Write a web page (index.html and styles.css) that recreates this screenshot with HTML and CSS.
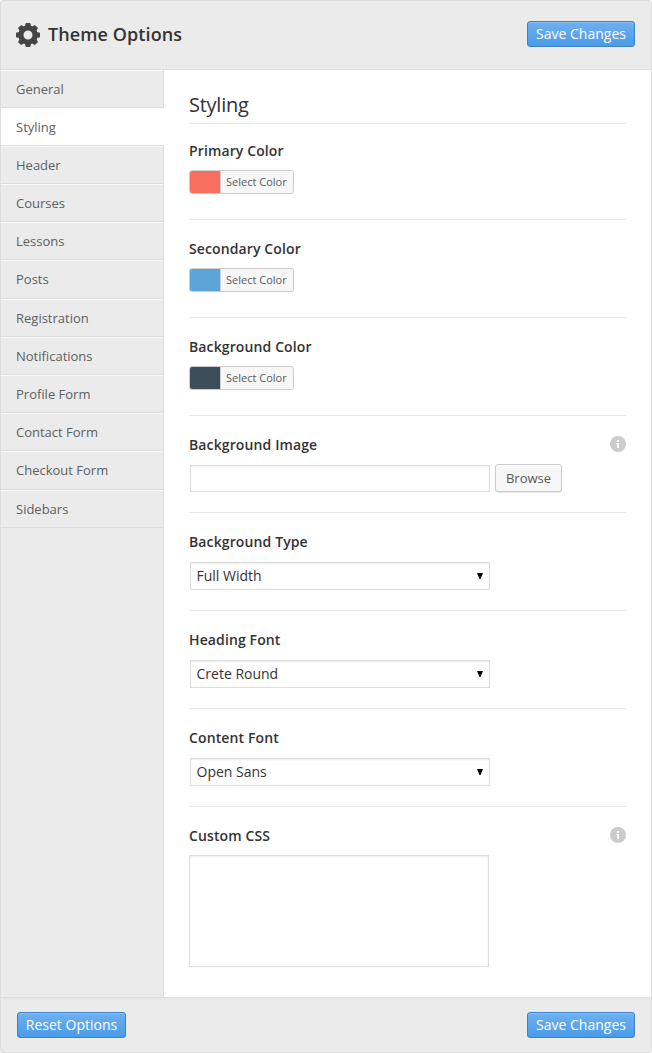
FILE: index.html
```html
<!DOCTYPE html>
<html lang="en">
<head>
<meta charset="utf-8">
<title>Theme Options</title>
<link rel="stylesheet" href="styles.css">
</head>
<body>
<form class="panel">
  <header class="panel-header">
    <svg class="gear" viewBox="-12 -12 24 24">
      <defs><path id="tooth" d="M-3.300-7L-2.500-11.200Q-2.300-12-1.500-12H1.500Q2.300-12 2.500-11.200L3.300-7z"/></defs>
      <circle r="7.100" fill="none" stroke="#444" stroke-width="5.200"/>
      <g fill="#444">
        <use href="#tooth"/><use href="#tooth" transform="rotate(45)"/>
        <use href="#tooth" transform="rotate(90)"/><use href="#tooth" transform="rotate(135)"/>
        <use href="#tooth" transform="rotate(180)"/><use href="#tooth" transform="rotate(225)"/>
        <use href="#tooth" transform="rotate(270)"/><use href="#tooth" transform="rotate(315)"/>
      </g>
    </svg>
    <h1 class="title">Theme Options</h1>
    <button type="button" class="btn-primary">Save Changes</button>
  </header>
  <div class="panel-body">
    <nav class="menu">
      <a class="menu-item">General</a>
      <a class="menu-item active">Styling</a>
      <a class="menu-item">Header</a>
      <a class="menu-item">Courses</a>
      <a class="menu-item">Lessons</a>
      <a class="menu-item">Posts</a>
      <a class="menu-item">Registration</a>
      <a class="menu-item">Notifications</a>
      <a class="menu-item">Profile Form</a>
      <a class="menu-item">Contact Form</a>
      <a class="menu-item">Checkout Form</a>
      <a class="menu-item">Sidebars</a>
    </nav>
    <main class="content">
      <h2 class="section-title">Styling</h2>
      <section class="option first">
        <h3 class="label">Primary Color</h3>
        <div class="color-picker"><span class="swatch coral"></span><span class="pick">Select Color</span></div>
      </section>
      <section class="option">
        <h3 class="label">Secondary Color</h3>
        <div class="color-picker"><span class="swatch blue"></span><span class="pick">Select Color</span></div>
      </section>
      <section class="option">
        <h3 class="label">Background Color</h3>
        <div class="color-picker"><span class="swatch slate"></span><span class="pick">Select Color</span></div>
      </section>
      <section class="option upload">
        <div class="label-row">
          <h3 class="label">Background Image</h3>
          <svg class="info" viewBox="0 0 16 16"><circle cx="8" cy="8" r="8" fill="#ccc"/><path d="M7 4h2v2H7zM6.500 7H9v5H7V8h-.5z" fill="#fff"/></svg>
        </div>
        <div class="upload-row"><input class="text-field" type="text"><button type="button" class="btn-browse">Browse</button></div>
      </section>
      <section class="option">
        <h3 class="label">Background Type</h3>
        <div class="select"><span>Full Width</span><svg class="arrow" viewBox="0 0 6 6"><path d="M0 0h6L3.500 6h-1z"/></svg></div>
      </section>
      <section class="option">
        <h3 class="label">Heading Font</h3>
        <div class="select"><span>Crete Round</span><svg class="arrow" viewBox="0 0 6 6"><path d="M0 0h6L3.500 6h-1z"/></svg></div>
      </section>
      <section class="option">
        <h3 class="label">Content Font</h3>
        <div class="select"><span>Open Sans</span><svg class="arrow" viewBox="0 0 6 6"><path d="M0 0h6L3.500 6h-1z"/></svg></div>
      </section>
      <section class="option last">
        <div class="label-row">
          <h3 class="label">Custom CSS</h3>
          <svg class="info" viewBox="0 0 16 16"><circle cx="8" cy="8" r="8" fill="#ccc"/><path d="M7 4h2v2H7zM6.500 7H9v5H7V8h-.5z" fill="#fff"/></svg>
        </div>
        <textarea class="code"></textarea>
      </section>
    </main>
  </div>
  <footer class="panel-footer">
    <button type="button" class="btn-primary reset">Reset Options</button>
    <button type="button" class="btn-primary">Save Changes</button>
  </footer>
</form>
</body>
</html>
```
FILE: styles.css
```css
* { box-sizing: border-box; }
body { margin: 0; background: #fff; font-family: "Open Sans", sans-serif; color: #333; }
h1, h2, h3 { margin: 0; }
.panel {
  width: 652px; height: 1053px; display: flex; flex-direction: column;
  border: 1px solid #ddd; border-radius: 3px; background: #ebebeb; overflow: hidden;
}
.panel-header {
  height: 69px; flex: none; display: flex; align-items: center;
  padding: 0 16px 2px 15px; border-bottom: 1px solid #ddd;
}
.gear { width: 24px; height: 24px; margin: 2px 8px 0 0; }
.title { flex: 1; font-size: 18px; font-weight: 600; line-height: 24px; letter-spacing: .1px; }
.btn-primary {
  width: 108px; height: 26px; padding: 0; border: 1px solid #3d82c4; border-radius: 3px;
  background: linear-gradient(#6db0f0, #4a9bea); box-shadow: inset 0 1px 0 #8ac2f5;
  color: #fff; font: 14px/24px "Open Sans", sans-serif; white-space: nowrap;
}
.btn-primary.reset { width: 109px; }
.panel-body { flex: 1; display: flex; min-height: 0; }
.menu { width: 163px; flex: none; border-right: 1px solid #ddd; }
.menu-item {
  display: block; height: 38px; padding: 0 15px; border-bottom: 1px solid #ddd;
  box-shadow: inset 0 1px 0 #fafafa; font-size: 13px; line-height: 38px; color: #606060;
}
.menu-item:nth-child(5n+6) { height: 39px; }
.menu-item.active { margin-right: -1px; background: #fff; }
.content { flex: 1; padding: 20px 25px 0; background: #fff; }
.section-title {
  height: 34px; border-bottom: 1px solid #e9e9e9;
  font-size: 20px; font-weight: 400; line-height: 30px; letter-spacing: -.25px;
}
.option { height: 98px; padding-top: 18px; border-bottom: 1px solid #e9e9e9; }
.option.first { height: 96px; padding-top: 16px; }
.option.upload { height: 97px; }
.option.last { border: 0; height: auto; }
.label { font-size: 14px; font-weight: 600; line-height: 22px; letter-spacing: .12px; }
.label-row { display: flex; align-items: center; justify-content: space-between; }
.info { width: 16px; height: 16px; margin-bottom: 2px; }
.color-picker {
  display: flex; width: 105px; height: 24px; margin-top: 8px;
  border: 1px solid #ccc; border-radius: 3px; background: #f7f7f7; overflow: hidden;
}
.swatch { width: 30px; }
.coral { background: #f7705f; }
.blue { background: #5ca5d9; }
.slate { background: #3c4e5a; }
.pick { flex: 1; padding-left: 5px; border-left: 1px solid #ccc; font-size: 11px; line-height: 22px; color: #5a5a5a; white-space: nowrap; }
.upload-row { display: flex; gap: 5px; margin: 8px 0 0 1px; }
.text-field, .select, .code {
  width: 300px; border: 1px solid #ddd; background: #fff; box-shadow: inset 0 1px 2px rgba(0,0,0,.07);
}
.text-field { height: 27px; margin: 1px 0 0; }
.btn-browse {
  width: 67px; height: 28px; padding: 0; border: 1px solid #ccc; border-radius: 3px; background: #f7f7f7;
  box-shadow: inset 0 1px 0 #fff, 0 1px 0 rgba(0,0,0,.08); color: #5a5a5a; font: 13px/26px "Open Sans", sans-serif;
}
.select {
  height: 28px; margin: 9px 0 0 1px; padding: 0 6px 0 5.500px; display: flex; align-items: center; justify-content: space-between;
  font-size: 14px; line-height: 26px;
}
.arrow { width: 6px; height: 6px; fill: #000; }
.code { display: block; height: 112px; margin: 8px 0 0; padding: 6px; resize: none; }
.panel-footer {
  height: 55px; flex: none; display: flex; align-items: flex-start; justify-content: space-between;
  padding: 14px 16px 0; border-top: 1px solid #ddd; box-shadow: inset 0 2px 2px rgba(0,0,0,.02);
}
```
